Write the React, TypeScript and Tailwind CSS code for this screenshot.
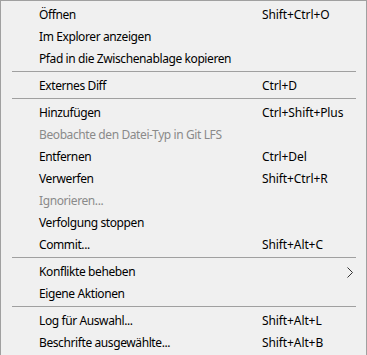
type Item =
  | { kind: "item"; label: string; shortcut?: string; disabled?: boolean; submenu?: boolean }
  | { kind: "sep" };

const items: Item[] = [
  { kind: "item", label: "Öffnen", shortcut: "Shift+Ctrl+O" },
  { kind: "item", label: "Im Explorer anzeigen" },
  { kind: "item", label: "Pfad in die Zwischenablage kopieren" },
  { kind: "sep" },
  { kind: "item", label: "Externes Diff", shortcut: "Ctrl+D" },
  { kind: "sep" },
  { kind: "item", label: "Hinzufügen", shortcut: "Ctrl+Shift+Plus" },
  { kind: "item", label: "Beobachte den Datei-Typ in Git LFS", disabled: true },
  { kind: "item", label: "Entfernen", shortcut: "Ctrl+Del" },
  { kind: "item", label: "Verwerfen", shortcut: "Shift+Ctrl+R" },
  { kind: "item", label: "Ignorieren...", disabled: true },
  { kind: "item", label: "Verfolgung stoppen" },
  { kind: "item", label: "Commit...", shortcut: "Shift+Alt+C" },
  { kind: "sep" },
  { kind: "item", label: "Konflikte beheben", submenu: true },
  { kind: "item", label: "Eigene Aktionen" },
  { kind: "sep" },
  { kind: "item", label: "Log für Auswahl...", shortcut: "Shift+Alt+L" },
  { kind: "item", label: "Beschrifte ausgewählte...", shortcut: "Shift+Alt+B" },
];

export default function App() {
  return (
    <div
      className="h-[355px] w-[367px] overflow-hidden border-l border-r border-t border-[#a0a0a0] bg-[#f0f0f0] pt-[3px] text-[12px] text-black"
      style={{ fontFamily: '"Noto Sans", "Open Sans", sans-serif' }}
    >
      {items.map((it, i) =>
        it.kind === "sep" ? (
          <div key={i} className="h-[5px] pt-[1px]">
            <div className="ml-[11px] mr-[10px] h-px bg-[#a0a0a0]" />
          </div>
        ) : (
          <div key={i} className="flex h-[22px] items-center pl-[38px]">
            <span
              className={`w-[223px] whitespace-nowrap tracking-[-0.4px] ${it.disabled ? "text-[#8a8a8a]" : ""}`}
            >
              {it.label}
            </span>
            <span className="flex-1 whitespace-nowrap tracking-[-0.1px]">{it.shortcut}</span>
            {it.submenu && (
              <svg className="mr-[13px] h-[11px] w-[6px]" viewBox="0 0 6 11" fill="none" stroke="#333" strokeWidth="1">
                <polyline points="0.5,0.5 5.5,5.5 0.5,10.5" />
              </svg>
            )}
          </div>
        )
      )}
    </div>
  );
}
